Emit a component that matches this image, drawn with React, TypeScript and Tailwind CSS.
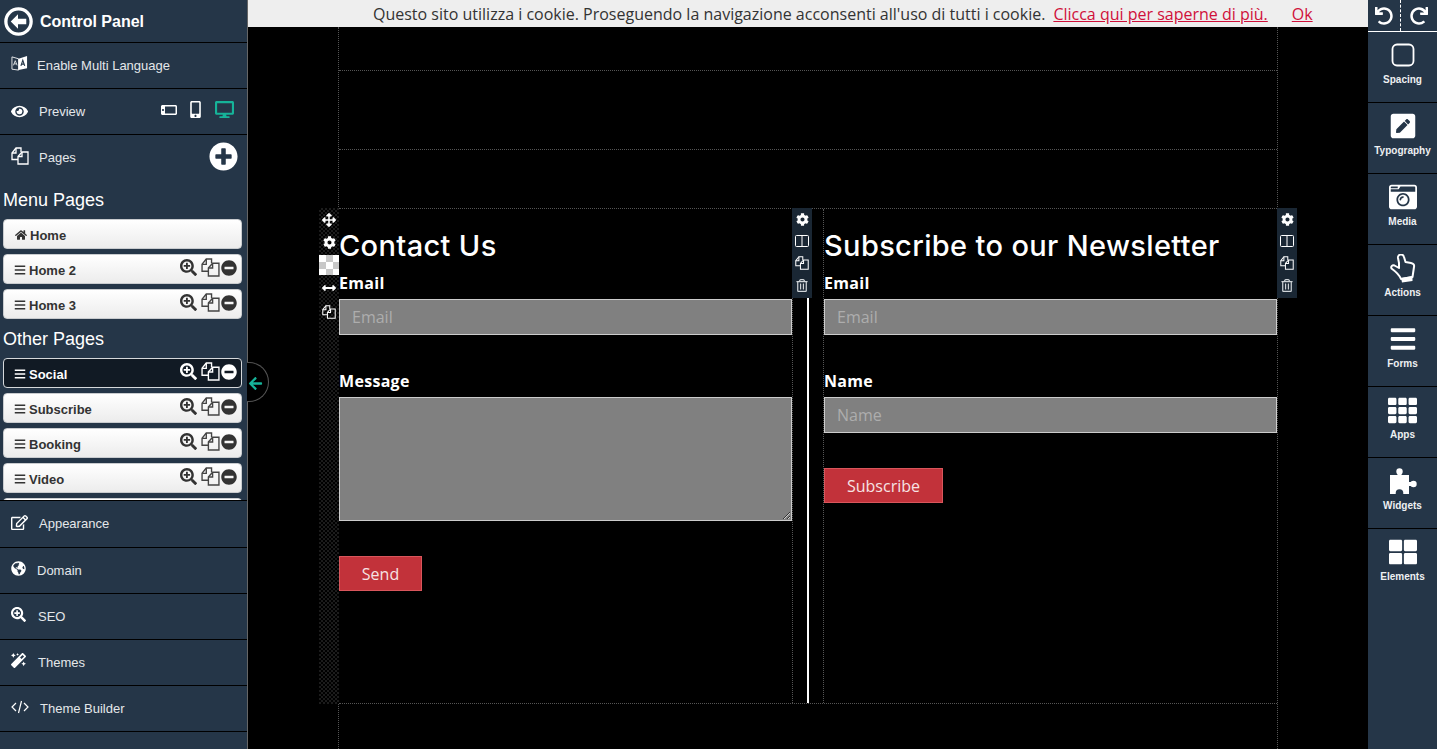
import React from "react";
import {
  FaEye,
  FaMobileAlt,
  FaDesktop,
  FaPlusCircle,
  FaHome,
  FaBars,
  FaSearchPlus,
  FaMinusCircle,
  FaArrowLeft,
  FaRegEdit,
  FaGlobeAmericas,
  FaMagic,
  FaCog,
  FaRegTrashAlt,
  FaArrowsAlt,
  FaArrowsAltH,
  FaUndo,
  FaRedo,
  FaPenSquare,
  FaCameraRetro,
  FaTh,
  FaThLarge,
} from "react-icons/fa";

function CopyIcon({ className }: { className?: string }) {
  return (
    <svg viewBox="0 0 18 18" className={className} fill="none" stroke="currentColor" strokeWidth="1.3">
      <path d="M7 12.5H1V6l4-5h5v4" />
      <path d="M5 1v5H1" />
      <path d="M7 9.5l4-4.5h6v12H7z" />
      <path d="M11 5v4.5H7" />
    </svg>
  );
}

function TranslateIcon({ className }: { className?: string }) {
  return (
    <svg viewBox="0 0 18 18" className={className}>
      <path d="M1 2l7 2v12l-7-1z" fill="none" stroke="currentColor" strokeWidth="0.9" />
      <path d="M8 4l9-3v13l-9 2z" fill="currentColor" />
      <path d="M2.5 11l2-5 2 5M3.2 9.4h2.6" fill="none" stroke="currentColor" strokeWidth="0.8" />
      <path d="M10.5 11.5l2-6 2 6M11.2 9.6h2.6" fill="none" stroke="#253648" strokeWidth="1.2" />
    </svg>
  );
}

function BackIcon({ className }: { className?: string }) {
  return (
    <svg viewBox="0 0 28 28" className={className}>
      <circle cx="14" cy="14" r="12.2" fill="none" stroke="currentColor" strokeWidth="3.2" />
      <path d="M6.5 14l7-7v4.4h8v5.2h-8V21z" fill="currentColor" />
    </svg>
  );
}

function CodeIcon({ className }: { className?: string }) {
  return (
    <svg viewBox="0 0 18 14" className={className} fill="none" stroke="currentColor" strokeWidth="1.2">
      <path d="M5 3L1 7l4 4M13 3l4 4-4 4M10.5 1L7.5 13" />
    </svg>
  );
}

function HandIcon({ className }: { className?: string }) {
  return (
    <svg viewBox="0 0 26 29" className={className}>
      <path
        d="M9 9L8 4a3 3 0 0 1 6-1l1.5 5 5.5 1c2.5.5 3.5 2 3 4l-1.500 10L11 25C9 20 5 17 1.500 14.500c-1-2 1-4 3-3L9 14z"
        fill="none"
        stroke="currentColor"
        strokeWidth="2"
        strokeLinejoin="round"
      />
      <path d="M11 24l11.500-2v5L12 28.500z" fill="currentColor" />
    </svg>
  );
}

function PuzzleIcon({ className }: { className?: string }) {
  return (
    <svg viewBox="0 0 28 27" className={className}>
      <rect x="1" y="7" width="19" height="19" fill="currentColor" />
      <circle cx="10.500" cy="3.500" r="3.200" fill="currentColor" />
      <rect x="8.500" y="4" width="4" height="4" fill="currentColor" />
      <circle cx="24.500" cy="16" r="3.200" fill="currentColor" />
      <rect x="19" y="14" width="4" height="4" fill="currentColor" />
      <circle cx="10.500" cy="25" r="3.800" fill="#253648" />
    </svg>
  );
}

function NavRow({ icon, label, gap, tall, padRight, children }: { icon: React.ReactNode; label: string; gap: string; tall?: boolean; padRight?: string; children?: React.ReactNode }) {
  return (
    <div className={`${tall ? "h-[47px]" : "h-[46px]"} shrink-0 flex items-center pl-[11px] ${padRight ?? "pr-[9px]"} border-b border-black text-[13px] text-[#e4e7ea]`}>
      <span className="w-[18px] flex justify-start -mt-1 text-white">{icon}</span>
      <span className={gap}>{label}</span>
      {children}
    </div>
  );
}

function PageRow({ label, home, active }: { label: string; home?: boolean; active?: boolean }) {
  const skin = active
    ? "bg-[#111a24] border-[#d5d8db] text-white"
    : "bg-gradient-to-b from-white to-[#ececec] border-[#c9cccf] text-[#333]";
  return (
    <div className={`ml-[3px] mr-[5px] mb-[5px] h-[30px] shrink-0 flex items-center pl-[10px] pr-[4px] rounded-[4px] border ${skin}`}>
      {home ? <FaHome className="w-[12px] h-[12px] ml-[1px] mr-[3px] mt-[1px]" /> : <FaBars className="w-[12px] h-[12px] mr-[3px] mt-[1px]" />}
      <span className="text-[13px] font-bold pt-[3px]">{label}</span>
      {!home && (
        <div className={`ml-auto flex items-center -mt-[3px] ${active ? "text-white" : "text-[#333]"}`}>
          <FaSearchPlus className="w-[17px] h-[17px] mr-[4px]" />
          <CopyIcon className={`w-[19px] h-[19px] ${active ? "text-white" : "text-[#444]"}`} />
          <FaMinusCircle className="w-[16px] h-[16px] ml-[1px]" />
        </div>
      )}
    </div>
  );
}

function Sidebar() {
  return (
    <aside className="relative w-[248px] shrink-0 h-full bg-[#253648] border-r border-[#666] flex flex-col font-['Liberation_Sans',Arial,sans-serif]">
      <div className="h-[43px] shrink-0 flex items-center pl-1 border-b border-black text-white">
        <BackIcon className="w-[29px] h-[29px]" />
        <span className="ml-[7px] pt-[1px] text-[16px] font-bold">Control Panel</span>
      </div>
      <NavRow icon={<TranslateIcon className="w-[17px] h-[17px]" />} label="Enable Multi Language" gap="ml-[8px]" />
      <NavRow icon={<FaEye className="w-[17px] h-[17px] mt-1" />} label="Preview" gap="ml-[10px] mt-[1px]" padRight="pr-[13px]">
        <div className="ml-auto flex items-center -mt-1">
          <FaMobileAlt className="w-[16px] h-[16px] rotate-90 text-white" />
          <FaMobileAlt className="w-[17px] h-[17px] ml-[10px] text-white" />
          <FaDesktop className="w-[19px] h-[19px] ml-[11px] text-[#16b399]" />
        </div>
      </NavRow>
      <div className="h-[366px] shrink-0 overflow-hidden border-b border-black flex flex-col">
        <div className="h-[46px] shrink-0 flex items-center pl-[11px] pr-[9px] text-[13px] text-[#e4e7ea]">
          <CopyIcon className="w-[18px] h-[18px] -mt-1 text-white" />
          <span className="ml-[10px] -mt-[1px]">Pages</span>
          <FaPlusCircle className="ml-auto w-[29px] h-[29px] -mt-[3px] text-white" />
        </div>
        <h2 className="h-[38px] shrink-0 flex items-center pl-[3px] text-[18px] text-white">Menu Pages</h2>
        <PageRow label="Home" home />
        <PageRow label="Home 2" />
        <PageRow label="Home 3" />
        <h2 className="h-[34px] shrink-0 flex items-center pl-[3px] pb-[3px] text-[18px] text-white">Other Pages</h2>
        <PageRow label="Social" active />
        <PageRow label="Subscribe" />
        <PageRow label="Booking" />
        <PageRow label="Video" />
        {/* next row, scrolled out of the list */}
        <div className="ml-[3px] mr-[5px] h-[30px] shrink-0 rounded-[4px] border border-[#c9cccf] bg-white" />
      </div>
      <NavRow tall icon={<FaRegEdit className="w-[17px] h-[17px]" />} label="Appearance" gap="ml-[10px]" />
      <NavRow icon={<FaGlobeAmericas className="w-[15px] h-[15px]" />} label="Domain" gap="ml-[8px]" />
      <NavRow icon={<FaSearchPlus className="w-[15px] h-[15px]" />} label="SEO" gap="ml-[9px]" />
      <NavRow icon={<FaMagic className="w-[15px] h-[15px]" />} label="Themes" gap="ml-[9px]" />
      <NavRow icon={<CodeIcon className="w-[18px] h-[14px]" />} label="Theme Builder" gap="ml-[11px]" />
      {/* collapse handle */}
      <div className="absolute left-[247px] top-[362px] w-[22px] h-[40px] rounded-r-full border border-l-0 border-[#555] bg-black flex items-center justify-start pl-[1px]">
        <FaArrowLeft className="w-[15px] h-[15px] mt-[2px] text-[#16b399]" />
      </div>
    </aside>
  );
}

function Field({ label, textarea }: { label: string; textarea?: boolean }) {
  const box = "block w-full bg-[#808080] border border-[#ccc] px-3 text-[16px] text-white outline-none placeholder:text-[#adadad]";
  return (
    <div>
      <label className="block h-6 leading-6 text-[16px] font-bold tracking-[0.3px] text-white">{label}</label>
      {textarea ? (
        <textarea className={`${box} mt-1 h-[124px]`} />
      ) : (
        <input className={`${box} mt-1 h-9`} placeholder={label} />
      )}
    </div>
  );
}

function SendButton({ label, width }: { label: string; width: string }) {
  return (
    <button className={`${width} h-[35px] mt-[35px] bg-[#c2323a] border border-[#d9565c] text-[#f6e3e4] text-[16px]`}>
      {label}
    </button>
  );
}

function Heading({ children }: { children: React.ReactNode }) {
  return (
    <h1 className="mt-[17px] h-10 leading-10 text-[29px] text-white font-['Inter',sans-serif] font-medium tracking-[0.35px] whitespace-nowrap">
      {children}
    </h1>
  );
}

function ColumnTools({ className }: { className: string }) {
  return (
    <div className={`absolute -top-px w-5 h-[90px] bg-[#1a2734] flex flex-col items-center text-white pt-[4px] ${className}`}>
      <FaCog className="w-[13px] h-[13px] mt-[1px]" />
      <svg viewBox="0 0 14 12" className="w-[14px] h-[12px] mt-[9px]" fill="none" stroke="currentColor" strokeWidth="1">
        <rect x="0.5" y="0.5" width="13" height="11" rx="1" />
        <path d="M7 0.5v11" />
      </svg>
      <CopyIcon className="w-[14px] h-[14px] mt-[9px]" />
      <FaRegTrashAlt className="w-[12px] h-[13px] mt-[9px] text-[#cfd4d8]" />
    </div>
  );
}

function Canvas() {
  return (
    <div className="flex-1 bg-black overflow-hidden font-['Open_Sans',sans-serif]">
      <div className="w-[940px] h-full mx-auto border-x border-dotted border-[#555]">
        <div className="h-[44px] border-b border-dotted border-[#555]" />
        <div className="h-[79px] border-b border-dotted border-[#555]" />
        <div className="h-[58px]" />
        <section className="relative h-[496px] flex border-y border-dotted border-[#555]">
          {/* row handle */}
          <div className="absolute -left-[20px] -top-px w-5 h-[496px] bg-[repeating-conic-gradient(#1c1c1c_0_25%,#000_0_50%)] bg-[length:4px_4px] flex flex-col items-center text-white">
            <FaArrowsAlt className="w-[14px] h-[14px] mt-[5px]" />
            <FaCog className="w-[13px] h-[13px] mt-[9px]" />
            <div className="w-5 h-5 mt-[6px] bg-[repeating-conic-gradient(#c8c8c8_0_25%,#fff_0_50%)] bg-[length:14px_14px]" />
            <FaArrowsAltH className="w-[14px] h-[14px] mt-[6px]" />
            <CopyIcon className="w-[14px] h-[14px] mt-[10px]" />
          </div>
          <div className="relative w-[454px] shrink-0 border-r border-dotted border-[#555]">
            <Heading>Contact Us</Heading>
            <div className="mt-[5px]">
              <Field label="Email" />
            </div>
            <div className="mt-[34px]">
              <Field label="Message" textarea />
            </div>
            <SendButton label="Send" width="w-[83px]" />
            <ColumnTools className="left-[453px]" />
          </div>
          <div className="w-[30px] shrink-0 flex justify-center">
            <div className="w-[2px] h-full bg-white" />
          </div>
          <div className="relative flex-1 border-l border-dotted border-[#555]">
            <Heading>Subscribe to our Newsletter</Heading>
            <div className="mt-[5px]">
              <Field label="Email" />
            </div>
            <div className="mt-[34px]">
              <Field label="Name" />
            </div>
            <SendButton label="Subscribe" width="w-[119px]" />
            <ColumnTools className="left-[453px]" />
          </div>
        </section>
      </div>
    </div>
  );
}

const tools = [
  {
    label: "Spacing",
    icon: (
      <svg viewBox="0 0 24 24" className="w-[24px] h-[24px]" fill="none" stroke="currentColor" strokeWidth="1.8">
        <rect x="1.5" y="1.5" width="21" height="21" rx="4.5" />
      </svg>
    ),
  },
  { label: "Typography", icon: <FaPenSquare className="w-[28px] h-[28px]" /> },
  { label: "Media", icon: <FaCameraRetro className="w-[28px] h-[28px]" /> },
  { label: "Actions", icon: <HandIcon className="w-[26px] h-[29px]" /> },
  { label: "Forms", icon: <FaBars className="w-[28px] h-[28px]" /> },
  { label: "Apps", icon: <FaTh className="w-[29px] h-[29px]" /> },
  { label: "Widgets", icon: <PuzzleIcon className="w-[28px] h-[27px]" /> },
  { label: "Elements", icon: <FaThLarge className="w-[28px] h-[28px]" /> },
];

function ToolPanel() {
  return (
    <aside className="w-[69px] shrink-0 h-full bg-[#253648] text-white font-['Liberation_Sans',Arial,sans-serif]">
      <div className="h-[32px] flex items-center border-b border-white">
        <div className="w-[32px] flex justify-center">
          <FaUndo className="w-[18px] h-[18px]" />
        </div>
        <div className="h-full border-l border-dashed border-white" />
        <div className="flex-1 flex justify-center">
          <FaRedo className="w-[18px] h-[18px]" />
        </div>
      </div>
      {tools.map((t, i) => (
        <div key={t.label} className={`h-[71px] flex flex-col items-center pt-[8px] ${i < tools.length - 1 ? "border-b border-black" : ""}`}>
          <div className="h-[30px] flex items-center justify-center">{t.icon}</div>
          <span className="mt-[4px] text-[10px] font-bold leading-[12px] text-[#eef0f2]">{t.label}</span>
        </div>
      ))}
    </aside>
  );
}

export default function App() {
  return (
    <div className="flex h-screen w-full overflow-hidden">
      <Sidebar />
      <main className="flex-1 min-w-0 h-full flex flex-col">
        <div className="h-[27px] shrink-0 bg-[#eeeeee] flex items-center pl-[125px] text-[16px] text-[#333] whitespace-nowrap font-['Open_Sans',sans-serif]">
          <span>Questo sito utilizza i cookie. Proseguendo la navigazione acconsenti all'uso di tutti i cookie.</span>
          <a className="ml-2 text-[#d0103a] underline">Clicca qui per saperne di più.</a>
          <a className="ml-6 text-[#d0103a] underline">Ok</a>
        </div>
        <Canvas />
      </main>
      <ToolPanel />
    </div>
  );
}
